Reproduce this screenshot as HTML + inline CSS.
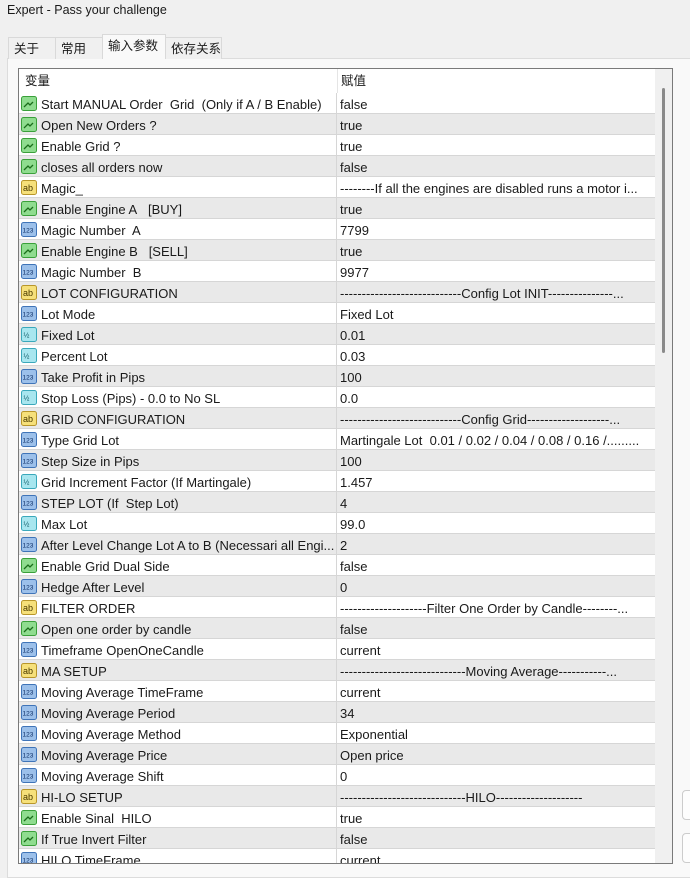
<!DOCTYPE html>
<html><head><meta charset="utf-8"><style>
*{margin:0;padding:0;box-sizing:border-box}
body{width:690px;height:867px;overflow:hidden;background:#f0f0f0;font-family:"Liberation Sans","Noto Sans CJK SC",sans-serif;font-size:13px;line-height:15px;color:#1a1a1a;position:relative}
.title{position:absolute;left:7px;top:3px;font-size:12.5px}
.tab{position:absolute;top:37px;height:22px;border:1px solid #d9d9d9;border-bottom:none;background:#f0f0f0;font-size:12.5px;line-height:14px;padding:4px 0 0 5px;white-space:nowrap;overflow:hidden}
.tab.act{top:34px;height:25px;background:#f9f9f9;z-index:2;padding-top:4px}
.panel{position:absolute;left:7px;top:58px;width:690px;height:820px;background:#f9f9f9;border:1px solid #dcdcdc}
.tbl{position:absolute;left:18px;top:68px;width:655px;height:796px;border:1px solid #7a7a7a;background:#fff;overflow:hidden}
.hdr{position:absolute;left:0;top:0;width:636px;height:24px;background:#fff}
.hdr span{position:absolute;top:5px;font-size:12.5px;line-height:14px}
.vd{position:absolute;left:318px;top:0;width:1px;height:24px;background:#e5e5e5}
.rows{position:absolute;left:0;top:24px;width:636px}
.r{height:21px;border-bottom:1px solid #d6d6d6;position:relative;white-space:nowrap}
.r.g{background:#e9e9e9}
.r .n{position:absolute;left:22px;top:4px}
.r .v{position:absolute;left:321px;top:4px}
.r .d{position:absolute;left:317px;top:0;width:1px;height:21px;background:#d6d6d6}
.ic{position:absolute;left:2px;top:3px;width:16px;height:15px;border-radius:2px}
.sb{position:absolute;left:636px;top:0;width:18px;height:796px;background:#f0f0f0}
.th{position:absolute;left:7px;top:19px;width:3px;height:265px;background:#8a8a8a;border-radius:2px}
.btn{position:absolute;left:682px;width:20px;height:30px;border:1px solid #ccc;border-radius:4px;background:#fdfdfd}
</style></head><body>
<div class="title">Expert - Pass your challenge</div>
<div class="panel"></div>
<div class="tab" style="left:8px;width:48px">关于</div>
<div class="tab" style="left:55px;width:48px">常用</div>
<div class="tab act" style="left:102px;width:64px">输入参数</div>
<div class="tab" style="left:165px;width:57px">依存关系</div>
<div class="tbl">
<div class="hdr"><span style="left:6px">变量</span><div class="vd"></div><span style="left:322px">赋值</span></div>
<div class="rows">
<svg width="0" height="0" style="position:absolute"><defs>
<symbol id="b" viewBox="0 0 16 15"><rect x=".5" y=".5" width="15" height="14" rx="2" fill="#8fdc8f" stroke="#3aa03a"/><path d="M3 11l4-4 2 2 3-3" stroke="#1b6e1b" fill="none" stroke-width="1.3"/></symbol>
<symbol id="s" viewBox="0 0 16 15"><rect x=".5" y=".5" width="15" height="14" rx="2" fill="#f6e07a" stroke="#b8962a"/><text x="2" y="11" font-size="9" font-family="Liberation Sans" fill="#4a3a00">ab</text></symbol>
<symbol id="i" viewBox="0 0 16 15"><rect x=".5" y=".5" width="15" height="14" rx="2" fill="#9cc0ea" stroke="#3f74b8"/><text x="1.5" y="10.5" font-size="6.5" font-family="Liberation Sans" fill="#0d2e66">123</text></symbol>
<symbol id="d" viewBox="0 0 16 15"><rect x=".5" y=".5" width="15" height="14" rx="2" fill="#a8e6ef" stroke="#3aa8bb"/><text x="2.5" y="10.5" font-size="7" font-family="Liberation Sans" fill="#0a5560">½</text></symbol>
</defs></svg>
<div class="r"><svg class="ic"><use href="#b"/></svg><span class="n">Start MANUAL Order&nbsp; Grid&nbsp; (Only if A / B Enable)</span><div class="d"></div><span class="v">false</span></div>
<div class="r g"><svg class="ic"><use href="#b"/></svg><span class="n">Open New Orders ?</span><div class="d"></div><span class="v">true</span></div>
<div class="r"><svg class="ic"><use href="#b"/></svg><span class="n">Enable Grid ?</span><div class="d"></div><span class="v">true</span></div>
<div class="r g"><svg class="ic"><use href="#b"/></svg><span class="n">closes all orders now</span><div class="d"></div><span class="v">false</span></div>
<div class="r"><svg class="ic"><use href="#s"/></svg><span class="n">Magic_</span><div class="d"></div><span class="v">--------If all the engines are disabled runs a motor i...</span></div>
<div class="r g"><svg class="ic"><use href="#b"/></svg><span class="n">Enable Engine A&nbsp;&nbsp; [BUY]</span><div class="d"></div><span class="v">true</span></div>
<div class="r"><svg class="ic"><use href="#i"/></svg><span class="n">Magic Number&nbsp; A</span><div class="d"></div><span class="v">7799</span></div>
<div class="r g"><svg class="ic"><use href="#b"/></svg><span class="n">Enable Engine B&nbsp;&nbsp; [SELL]</span><div class="d"></div><span class="v">true</span></div>
<div class="r"><svg class="ic"><use href="#i"/></svg><span class="n">Magic Number&nbsp; B</span><div class="d"></div><span class="v">9977</span></div>
<div class="r g"><svg class="ic"><use href="#s"/></svg><span class="n">LOT CONFIGURATION</span><div class="d"></div><span class="v">----------------------------Config Lot INIT---------------...</span></div>
<div class="r"><svg class="ic"><use href="#i"/></svg><span class="n">Lot Mode</span><div class="d"></div><span class="v">Fixed Lot</span></div>
<div class="r g"><svg class="ic"><use href="#d"/></svg><span class="n">Fixed Lot</span><div class="d"></div><span class="v">0.01</span></div>
<div class="r"><svg class="ic"><use href="#d"/></svg><span class="n">Percent Lot</span><div class="d"></div><span class="v">0.03</span></div>
<div class="r g"><svg class="ic"><use href="#i"/></svg><span class="n">Take Profit in Pips</span><div class="d"></div><span class="v">100</span></div>
<div class="r"><svg class="ic"><use href="#d"/></svg><span class="n">Stop Loss (Pips) - 0.0 to No SL</span><div class="d"></div><span class="v">0.0</span></div>
<div class="r g"><svg class="ic"><use href="#s"/></svg><span class="n">GRID CONFIGURATION</span><div class="d"></div><span class="v">----------------------------Config Grid-------------------...</span></div>
<div class="r"><svg class="ic"><use href="#i"/></svg><span class="n">Type Grid Lot</span><div class="d"></div><span class="v">Martingale Lot&nbsp; 0.01 / 0.02 / 0.04 / 0.08 / 0.16 /.........</span></div>
<div class="r g"><svg class="ic"><use href="#i"/></svg><span class="n">Step Size in Pips</span><div class="d"></div><span class="v">100</span></div>
<div class="r"><svg class="ic"><use href="#d"/></svg><span class="n">Grid Increment Factor (If Martingale)</span><div class="d"></div><span class="v">1.457</span></div>
<div class="r g"><svg class="ic"><use href="#i"/></svg><span class="n">STEP LOT (If&nbsp; Step Lot)</span><div class="d"></div><span class="v">4</span></div>
<div class="r"><svg class="ic"><use href="#d"/></svg><span class="n">Max Lot</span><div class="d"></div><span class="v">99.0</span></div>
<div class="r g"><svg class="ic"><use href="#i"/></svg><span class="n">After Level Change Lot A to B (Necessari all Engi...</span><div class="d"></div><span class="v">2</span></div>
<div class="r"><svg class="ic"><use href="#b"/></svg><span class="n">Enable Grid Dual Side</span><div class="d"></div><span class="v">false</span></div>
<div class="r g"><svg class="ic"><use href="#i"/></svg><span class="n">Hedge After Level</span><div class="d"></div><span class="v">0</span></div>
<div class="r"><svg class="ic"><use href="#s"/></svg><span class="n">FILTER ORDER</span><div class="d"></div><span class="v">--------------------Filter One Order by Candle--------...</span></div>
<div class="r g"><svg class="ic"><use href="#b"/></svg><span class="n">Open one order by candle</span><div class="d"></div><span class="v">false</span></div>
<div class="r"><svg class="ic"><use href="#i"/></svg><span class="n">Timeframe OpenOneCandle</span><div class="d"></div><span class="v">current</span></div>
<div class="r g"><svg class="ic"><use href="#s"/></svg><span class="n">MA SETUP</span><div class="d"></div><span class="v">-----------------------------Moving Average-----------...</span></div>
<div class="r"><svg class="ic"><use href="#i"/></svg><span class="n">Moving Average TimeFrame</span><div class="d"></div><span class="v">current</span></div>
<div class="r g"><svg class="ic"><use href="#i"/></svg><span class="n">Moving Average Period</span><div class="d"></div><span class="v">34</span></div>
<div class="r"><svg class="ic"><use href="#i"/></svg><span class="n">Moving Average Method</span><div class="d"></div><span class="v">Exponential</span></div>
<div class="r g"><svg class="ic"><use href="#i"/></svg><span class="n">Moving Average Price</span><div class="d"></div><span class="v">Open price</span></div>
<div class="r"><svg class="ic"><use href="#i"/></svg><span class="n">Moving Average Shift</span><div class="d"></div><span class="v">0</span></div>
<div class="r g"><svg class="ic"><use href="#s"/></svg><span class="n">HI-LO SETUP</span><div class="d"></div><span class="v">-----------------------------HILO--------------------</span></div>
<div class="r"><svg class="ic"><use href="#b"/></svg><span class="n">Enable Sinal&nbsp; HILO</span><div class="d"></div><span class="v">true</span></div>
<div class="r g"><svg class="ic"><use href="#b"/></svg><span class="n">If True Invert Filter</span><div class="d"></div><span class="v">false</span></div>
<div class="r"><svg class="ic"><use href="#i"/></svg><span class="n">HILO TimeFrame</span><div class="d"></div><span class="v">current</span></div>
</div>
<div class="sb"><div class="th"></div></div>
</div>
<div class="btn" style="top:790px"></div>
<div class="btn" style="top:833px"></div>
</body></html>
